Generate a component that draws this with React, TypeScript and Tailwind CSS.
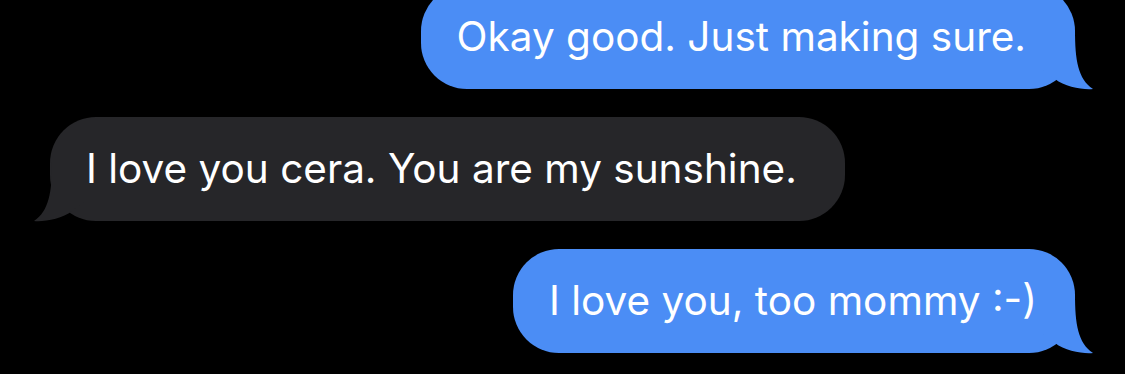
import React from "react";

function Tail({ color, left }: { color: string; left?: boolean }) {
  return (
    <svg
      width="50"
      height="60"
      viewBox="0 0 50 60"
      className={
        left
          ? "absolute left-[-16px] bottom-[-1px] scale-x-[-1]"
          : "absolute right-[-18px] bottom-[-1px]"
      }
    >
      <path
        d="M0,0 H32 C32,30 35,49 50,59 C40,60 22,57 12,49 L0,40 Z"
        fill={color}
      />
    </svg>
  );
}

function Bubble({
  text,
  side,
  padRight,
}: {
  text: string;
  side: "left" | "right";
  padRight: string;
}) {
  const blue = side === "right";
  return (
    <div className={blue ? "flex justify-end pr-[50px]" : "flex justify-start pl-[50px]"}>
      <div
        className={
          (blue ? "bg-[#4b8df5]" : "bg-[#262629]") +
          " relative h-[104px] rounded-[46px] pl-[36px] " +
          padRight +
          " flex items-center text-white text-[40.5px] leading-none whitespace-nowrap"
        }
        style={{ fontFamily: "Inter, 'Noto Sans', sans-serif" }}
      >
        <span className="relative z-10">{text}</span>
        <Tail color={blue ? "#4b8df5" : "#262629"} left={!blue} />
      </div>
    </div>
  );
}

export default function App() {
  return (
    <div className="w-[1125px] h-[374px] bg-black overflow-hidden">
      <div className="flex flex-col gap-[28px] mt-[-15px]">
        <Bubble text="Okay good. Just making sure." side="right" padRight="pr-[49px]" />
        <Bubble text="I love you cera. You are my sunshine." side="left" padRight="pr-[48px]" />
        <Bubble text="I love you, too mommy :-)" side="right" padRight="pr-[38px]" />
      </div>
    </div>
  );
}
